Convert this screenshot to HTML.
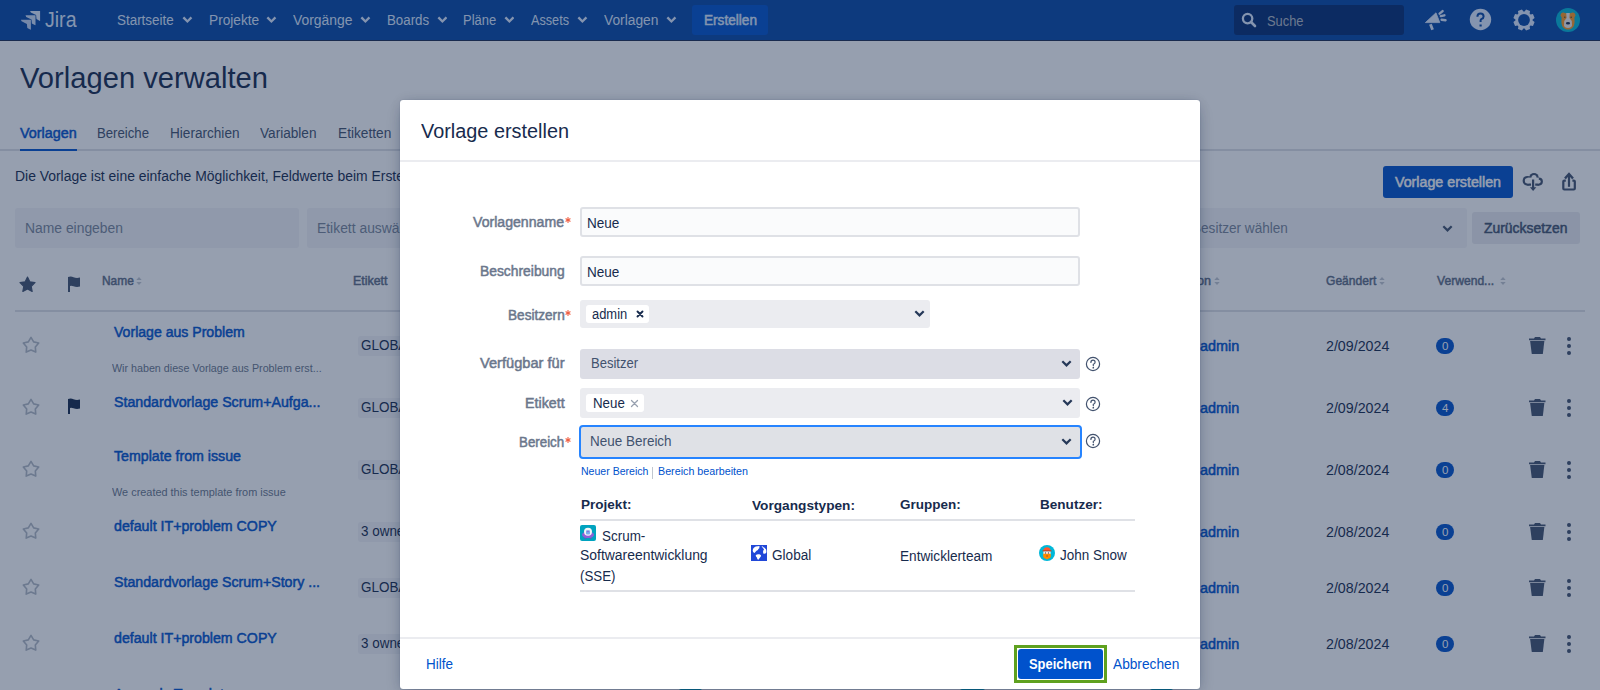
<!DOCTYPE html>
<html><head><meta charset="utf-8"><title>Vorlagen verwalten</title>
<style>
html,body{margin:0;padding:0;width:1600px;height:690px;overflow:hidden;background:#fff;font-family:"Liberation Sans", sans-serif;}
.t{position:absolute;white-space:nowrap;transform-origin:0 0;}
svg{display:block}
</style></head><body>
<div style="position:absolute;left:0px;top:0px;width:1600px;height:40px;background:#0747a6"></div>
<div style="position:absolute;left:0px;top:40px;width:1600px;height:1px;background:#1d2d50"></div>
<svg style="position:absolute;left:20px;top:10px" width="21" height="21" viewBox="0 0 21 21"><path transform="translate(10.1 0.9)" d="M0 0 H10 V10 L9.3 9.8 L6.4 8.2 L6 4.2 L0.7 1.6 Z" fill="#deebff" opacity="1"/><path transform="translate(5.5 5.3)" d="M0 0 H10 V10 L9.3 9.8 L6.4 8.2 L6 4.2 L0.7 1.6 Z" fill="#deebff" opacity="0.92"/><path transform="translate(0.9 9.7)" d="M0 0 H10 V10 L9.3 9.8 L6.4 8.2 L6 4.2 L0.7 1.6 Z" fill="#deebff" opacity="0.88"/></svg>
<div class="t" style="left:44.8px;top:10.03px;font-size:21.5px;line-height:21.5px;color:#deebff;transform:scaleX(0.9093);">Jira</div>
<div class="t" style="left:117.3px;top:13.00px;font-size:14px;line-height:14px;color:#deebff;transform:scaleX(0.9588);">Startseite</div>
<svg style="position:absolute;left:182px;top:16.3px" width="10.8" height="7.6" viewBox="0 0 10.8 7.6"><path d="M2.15 2.15 L5.4 5.449999999999999 L8.65 2.15" fill="none" stroke="#deebff" stroke-width="2.3" stroke-linecap="square" stroke-linejoin="miter"/></svg>
<div class="t" style="left:208.8px;top:13.00px;font-size:14px;line-height:14px;color:#deebff;transform:scaleX(0.9774);">Projekte</div>
<svg style="position:absolute;left:266px;top:16.3px" width="10.8" height="7.6" viewBox="0 0 10.8 7.6"><path d="M2.15 2.15 L5.4 5.449999999999999 L8.65 2.15" fill="none" stroke="#deebff" stroke-width="2.3" stroke-linecap="square" stroke-linejoin="miter"/></svg>
<div class="t" style="left:292.8px;top:13.00px;font-size:14px;line-height:14px;color:#deebff;transform:scaleX(0.9909);">Vorgänge</div>
<svg style="position:absolute;left:360px;top:16.3px" width="10.8" height="7.6" viewBox="0 0 10.8 7.6"><path d="M2.15 2.15 L5.4 5.449999999999999 L8.65 2.15" fill="none" stroke="#deebff" stroke-width="2.3" stroke-linecap="square" stroke-linejoin="miter"/></svg>
<div class="t" style="left:386.9px;top:13.00px;font-size:14px;line-height:14px;color:#deebff;transform:scaleX(0.9491);">Boards</div>
<svg style="position:absolute;left:436.5px;top:16.3px" width="10.8" height="7.6" viewBox="0 0 10.8 7.6"><path d="M2.15 2.15 L5.4 5.449999999999999 L8.65 2.15" fill="none" stroke="#deebff" stroke-width="2.3" stroke-linecap="square" stroke-linejoin="miter"/></svg>
<div class="t" style="left:463.4px;top:13.00px;font-size:14px;line-height:14px;color:#deebff;transform:scaleX(0.9272);">Pläne</div>
<svg style="position:absolute;left:503.7px;top:16.3px" width="10.8" height="7.6" viewBox="0 0 10.8 7.6"><path d="M2.15 2.15 L5.4 5.449999999999999 L8.65 2.15" fill="none" stroke="#deebff" stroke-width="2.3" stroke-linecap="square" stroke-linejoin="miter"/></svg>
<div class="t" style="left:531px;top:13.00px;font-size:14px;line-height:14px;color:#deebff;transform:scaleX(0.9045);">Assets</div>
<svg style="position:absolute;left:577px;top:16.3px" width="10.8" height="7.6" viewBox="0 0 10.8 7.6"><path d="M2.15 2.15 L5.4 5.449999999999999 L8.65 2.15" fill="none" stroke="#deebff" stroke-width="2.3" stroke-linecap="square" stroke-linejoin="miter"/></svg>
<div class="t" style="left:603.8px;top:13.00px;font-size:14px;line-height:14px;color:#deebff;transform:scaleX(0.9843);">Vorlagen</div>
<svg style="position:absolute;left:665.8px;top:16.3px" width="10.8" height="7.6" viewBox="0 0 10.8 7.6"><path d="M2.15 2.15 L5.4 5.449999999999999 L8.65 2.15" fill="none" stroke="#deebff" stroke-width="2.3" stroke-linecap="square" stroke-linejoin="miter"/></svg>
<div style="position:absolute;left:692px;top:5px;width:76px;height:30px;background:#0052cc;border-radius:3px"></div>
<div class="t" style="left:704px;top:13.10px;font-size:14px;line-height:14px;color:#deebff;-webkit-text-stroke:0.5px #deebff;transform:scaleX(0.9730);">Erstellen</div>
<div style="position:absolute;left:1234px;top:5px;width:170px;height:30px;background:#052d73;border-radius:3px"></div>
<svg style="position:absolute;left:1241px;top:12px" width="16" height="16" viewBox="0 0 16 16"><circle cx="6.6" cy="6.6" r="4.7" fill="none" stroke="#deebff" stroke-width="2.3"/><path d="M10 10 L14 14" stroke="#deebff" stroke-width="2.6" stroke-linecap="round"/></svg>
<div class="t" style="left:1266.5px;top:14.10px;font-size:14px;line-height:14px;color:#b3bac5;transform:scaleX(0.9195);">Suche</div>
<svg style="position:absolute;left:1420px;top:5px" width="30" height="30" viewBox="0 0 30 30"><path d="M5.4 17.6 L16 7.8 L19.8 17.6 Z" fill="#deebff" stroke="#deebff" stroke-width="0.8" stroke-linejoin="round"/><path d="M10.4 19.3 L12.6 24.8" stroke="#deebff" stroke-width="2.8"/><g stroke="#deebff" stroke-width="2.4" stroke-linecap="round"><path d="M19.6 8.7 L22.6 6.1"/><path d="M20.8 11.1 L24.4 10.3"/><path d="M21.6 14.7 L25.6 15.2"/></g></svg>
<svg style="position:absolute;left:1468.5px;top:8.3px" width="23" height="23" viewBox="0 0 23 23"><circle cx="11.5" cy="11.5" r="10.7" fill="#deebff"/><path d="M8.4 8.8 Q8.4 5.5 11.5 5.5 Q14.6 5.5 14.6 8.4 Q14.6 10.2 12.3 11.2 Q11.6 11.6 11.6 12.6 L11.6 14" fill="none" stroke="#0747a6" stroke-width="2" stroke-linecap="butt"/><rect x="10.5" y="16.5" width="2.2" height="2" fill="#0747a6"/></svg>
<svg style="position:absolute;left:1513.1px;top:8.9px" width="22" height="22" viewBox="0 0 22 22"><polygon points="21.60,13.07 19.96,17.03 17.51,16.62 16.62,17.51 17.03,19.96 13.07,21.60 11.62,19.58 10.38,19.58 8.93,21.60 4.97,19.96 5.38,17.51 4.49,16.62 2.04,17.03 0.40,13.07 2.42,11.62 2.42,10.38 0.40,8.93 2.04,4.97 4.49,5.38 5.38,4.49 4.97,2.04 8.93,0.40 10.38,2.42 11.62,2.42 13.07,0.40 17.03,2.04 16.62,4.49 17.51,5.38 19.96,4.97 21.60,8.93 19.58,10.38 19.58,11.62" fill="#deebff"/><circle cx="11" cy="11" r="5.9" fill="#0747a6"/></svg>
<svg style="position:absolute;left:1556px;top:8px" width="24" height="24" viewBox="0 0 24 24"><circle cx="12" cy="12" r="12" fill="#00b8d9"/><path d="M4.5 7.5 Q5 4.3 7.5 4.6 L9.6 5.2 L14.4 5.2 L16.5 4.6 Q19 4.3 19.5 7.5 L18.4 9.5 L18.6 14 Q18.3 19 15.5 20.5 L13.5 21.5 L10.5 21.5 L8.5 20.5 Q5.7 19 5.4 14 L5.6 9.5 Z" fill="#ff991f"/><path d="M10.2 5 L13.8 5 L13.4 10 L15.8 13 L16 17.5 Q15.5 19.6 12 20 Q8.5 19.6 8 17.5 L8.2 13 L10.6 10 Z" fill="#f0f0f0"/><ellipse cx="12" cy="15.2" rx="2.1" ry="1.2" fill="#172b4d"/><circle cx="8.8" cy="9.2" r="0.8" fill="#5a4a2a"/><circle cx="15.2" cy="9.2" r="0.8" fill="#5a4a2a"/></svg>
<div class="t" style="left:20.3px;top:63.20px;font-size:30px;line-height:30px;color:#172b4d;transform:scaleX(0.9719);">Vorlagen verwalten</div>
<div style="position:absolute;left:0px;top:149px;width:1600px;height:2px;background:#dfe1e6"></div>
<div class="t" style="left:20px;top:125.60px;font-size:14px;line-height:14px;color:#0052cc;-webkit-text-stroke:0.5px #0052cc;transform:scaleX(1.0268);">Vorlagen</div>
<div style="position:absolute;left:20px;top:149px;width:57px;height:2px;background:#0052cc"></div>
<div class="t" style="left:97px;top:125.60px;font-size:14px;line-height:14px;color:#42526e;transform:scaleX(0.9411);">Bereiche</div>
<div class="t" style="left:170px;top:125.60px;font-size:14px;line-height:14px;color:#42526e;transform:scaleX(0.9709);">Hierarchien</div>
<div class="t" style="left:260px;top:125.60px;font-size:14px;line-height:14px;color:#42526e;transform:scaleX(0.9722);">Variablen</div>
<div class="t" style="left:337.5px;top:125.60px;font-size:14px;line-height:14px;color:#42526e;transform:scaleX(0.9775);">Etiketten</div>
<div class="t" style="left:15.4px;top:169.10px;font-size:14px;line-height:14px;color:#172b4d;transform:scaleX(0.9937);">Die Vorlage ist eine einfache Möglichkeit, Feldwerte beim Erstellen von Vorgängen vorab auszufüllen.</div>
<div style="position:absolute;left:15px;top:208px;width:284px;height:40px;background:#f4f5f7;border-radius:3px"></div>
<div class="t" style="left:25px;top:221.10px;font-size:14px;line-height:14px;color:#7a869a;transform:scaleX(0.9914);">Name eingeben</div>
<div style="position:absolute;left:307px;top:208px;width:290px;height:40px;background:#f4f5f7;border-radius:3px"></div>
<div class="t" style="left:317.4px;top:221.10px;font-size:14px;line-height:14px;color:#7a869a;transform:scaleX(0.9914);">Etikett auswählen</div>
<div style="position:absolute;left:1000px;top:208px;width:467px;height:40px;background:#f4f5f7;border-radius:3px"></div>
<div class="t" style="left:1192.1370825000001px;top:221.10px;font-size:14px;line-height:14px;color:#7a869a;transform:scaleX(0.9700);">Besitzer wählen</div>
<svg style="position:absolute;left:1441.5px;top:224.5px" width="11" height="7.5" viewBox="0 0 11 7.5"><path d="M2.1 2.1 L5.5 5.4 L8.9 2.1" fill="none" stroke="#42526e" stroke-width="2.2" stroke-linecap="square" stroke-linejoin="miter"/></svg>
<div style="position:absolute;left:1472px;top:212px;width:108px;height:32px;background:#ebecf0;border-radius:3px"></div>
<div class="t" style="left:1484px;top:220.80px;font-size:14px;line-height:14px;color:#42526e;-webkit-text-stroke:0.5px #42526e;transform:scaleX(0.9936);">Zurücksetzen</div>
<div style="position:absolute;left:1383px;top:166px;width:130px;height:32px;background:#0052cc;border-radius:3px"></div>
<div class="t" style="left:1395px;top:175.10px;font-size:14px;line-height:14px;color:#ffffff;-webkit-text-stroke:0.5px #ffffff;transform:scaleX(1.0164);">Vorlage erstellen</div>
<svg style="position:absolute;left:1515px;top:165px" width="32" height="30" viewBox="0 0 32 30"><g fill="#42526e"><circle cx="12.5" cy="15.8" r="4.9"/><circle cx="19" cy="12.6" r="4.7"/><circle cx="23.8" cy="16.6" r="4.1"/><rect x="12.5" y="15.8" width="11.3" height="4.9"/></g><g fill="#fff"><circle cx="12.5" cy="15.8" r="2.7"/><circle cx="19" cy="12.6" r="2.5"/><circle cx="23.8" cy="16.6" r="1.9"/><rect x="12.5" y="12.6" width="11.3" height="5.9"/><rect x="16" y="17" width="4.2" height="5"/></g><rect x="17" y="14.5" width="2.2" height="8.5" fill="#42526e"/><path d="M14.9 22.2 L21.3 22.2 L18.1 25.9 Z" fill="#42526e"/></svg>
<svg style="position:absolute;left:1515px;top:165px" width="64" height="30" viewBox="0 0 64 30"><path d="M50.8 15.6 H49.3 Q48.3 15.6 48.3 16.6 V23.5 Q48.3 24.5 49.3 24.5 H58.8 Q59.8 24.5 59.8 23.5 V16.6 Q59.8 15.6 58.8 15.6 H57.4" fill="none" stroke="#42526e" stroke-width="2.2"/><path d="M54 9.5 V21.8" stroke="#42526e" stroke-width="2.2"/><path d="M50.8 12.6 L54 9 L57.2 12.6" fill="none" stroke="#42526e" stroke-width="2.4" stroke-linecap="square"/></svg>
<svg style="position:absolute;left:18.5px;top:275.5px" width="17" height="17" viewBox="-0.6 -0.6 18.2 18.2"><polygon points="8.50,0.60 11.00,5.66 16.58,6.47 12.54,10.41 13.50,15.98 8.50,13.35 3.50,15.98 4.46,10.41 0.42,6.47 6.00,5.66" fill="#42526e" stroke="#42526e" stroke-width="1.2" stroke-linejoin="round"/></svg>
<svg style="position:absolute;left:66.5px;top:276px" width="14" height="16" viewBox="0 0 14 16"><path d="M1 1 Q4 0 6.5 1.2 Q9.5 2.5 13 1.5 V10.5 Q9.5 11.5 6.5 10.2 Q4 9.2 3 10 V16 H1 Z" fill="#42526e"/></svg>
<div class="t" style="left:102px;top:273.95px;font-size:13px;line-height:13px;color:#5e6c84;-webkit-text-stroke:0.5px #5e6c84;transform:scaleX(0.9170);">Name</div>
<svg style="position:absolute;left:136.2px;top:277px" width="6" height="9" viewBox="0 0 6 9"><path d="M0.3 3 L3 0 L5.7 3 Z M0.3 5 L3 8 L5.7 5 Z" fill="#c1c7d0"/></svg>
<div class="t" style="left:353px;top:273.95px;font-size:13px;line-height:13px;color:#5e6c84;-webkit-text-stroke:0.5px #5e6c84;transform:scaleX(0.9550);">Etikett</div>
<div class="t" style="left:1169.43954203125px;top:273.95px;font-size:13px;line-height:13px;color:#5e6c84;-webkit-text-stroke:0.5px #5e6c84;transform:scaleX(0.9700);">Version</div>
<svg style="position:absolute;left:1214.3px;top:277px" width="6" height="9" viewBox="0 0 6 9"><path d="M0.3 3 L3 0 L5.7 3 Z M0.3 5 L3 8 L5.7 5 Z" fill="#c1c7d0"/></svg>
<div class="t" style="left:1326.3px;top:273.95px;font-size:13px;line-height:13px;color:#5e6c84;-webkit-text-stroke:0.5px #5e6c84;transform:scaleX(0.9280);">Geändert</div>
<svg style="position:absolute;left:1379.3px;top:277px" width="6" height="9" viewBox="0 0 6 9"><path d="M0.3 3 L3 0 L5.7 3 Z M0.3 5 L3 8 L5.7 5 Z" fill="#c1c7d0"/></svg>
<div class="t" style="left:1436.5px;top:273.95px;font-size:13px;line-height:13px;color:#5e6c84;-webkit-text-stroke:0.5px #5e6c84;transform:scaleX(0.9312);">Verwend...</div>
<svg style="position:absolute;left:1500.3px;top:277px" width="6" height="9" viewBox="0 0 6 9"><path d="M0.3 3 L3 0 L5.7 3 Z M0.3 5 L3 8 L5.7 5 Z" fill="#c1c7d0"/></svg>
<div style="position:absolute;left:15px;top:310px;width:1570px;height:2px;background:#dfe1e6"></div>
<svg style="position:absolute;left:22px;top:336.4px" width="18" height="18" viewBox="-1 -1 20 20"><polygon points="9.00,0.60 11.96,5.52 17.56,6.82 13.79,11.16 14.29,16.88 9.00,14.64 3.71,16.88 4.21,11.16 0.44,6.82 6.04,5.52" fill="none" stroke="#b3bac5" stroke-width="1.8" stroke-linejoin="round"/></svg>
<div class="t" style="left:114px;top:324.90px;font-size:14px;line-height:14px;color:#0052cc;-webkit-text-stroke:0.5px #0052cc;transform:scaleX(1.0056);">Vorlage aus Problem</div>
<div class="t" style="left:112px;top:362.65px;font-size:11px;line-height:11px;color:#6b778c;transform:scaleX(0.9739);">Wir haben diese Vorlage aus Problem erst...</div>
<div style="position:absolute;left:357.5px;top:336px;width:80px;height:19.5px;background:#f4f5f7;border-radius:3px"></div>
<div class="t" style="left:361.4px;top:337.70px;font-size:14px;line-height:14px;color:#172b4d;transform:scaleX(0.9600);">GLOBAL</div>
<div class="t" style="left:1200px;top:338.90px;font-size:14px;line-height:14px;color:#0052cc;-webkit-text-stroke:0.5px #0052cc;transform:scaleX(1.0307);">admin</div>
<div class="t" style="left:1326px;top:338.90px;font-size:14px;line-height:14px;color:#172b4d;transform:scaleX(1.0163);">2/09/2024</div>
<div style="position:absolute;left:1436px;top:337.8px;width:18px;height:16px;background:#0052cc;border-radius:8px"></div>
<div class="t" style="left:1442px;top:340.73px;font-size:11.5px;line-height:11.5px;color:#ffffff;">0</div>
<svg style="position:absolute;left:1529px;top:337px" width="17" height="17" viewBox="0 0 17 17"><path d="M0 1.6 H5 L6 0 H11 L12 1.6 H16.5 V3.2 H0 Z" fill="#42526e"/><path d="M1.1 4 H15.4 L13.8 17 H2.8 Z" fill="#42526e"/></svg>
<div style="position:absolute;left:1567.2px;top:336.90000000000003px;width:3.8px;height:3.8px;background:#42526e;border-radius:50%"></div>
<div style="position:absolute;left:1567.2px;top:344.0px;width:3.8px;height:3.8px;background:#42526e;border-radius:50%"></div>
<div style="position:absolute;left:1567.2px;top:351.1px;width:3.8px;height:3.8px;background:#42526e;border-radius:50%"></div>
<svg style="position:absolute;left:22px;top:398.4px" width="18" height="18" viewBox="-1 -1 20 20"><polygon points="9.00,0.60 11.96,5.52 17.56,6.82 13.79,11.16 14.29,16.88 9.00,14.64 3.71,16.88 4.21,11.16 0.44,6.82 6.04,5.52" fill="none" stroke="#b3bac5" stroke-width="1.8" stroke-linejoin="round"/></svg>
<svg style="position:absolute;left:66.5px;top:398px" width="14" height="16" viewBox="0 0 14 16"><path d="M1 1 Q4 0 6.5 1.2 Q9.5 2.5 13 1.5 V10.5 Q9.5 11.5 6.5 10.2 Q4 9.2 3 10 V16 H1 Z" fill="#172b4d"/></svg>
<div class="t" style="left:114px;top:394.80px;font-size:14px;line-height:14px;color:#0052cc;-webkit-text-stroke:0.5px #0052cc;transform:scaleX(1.0142);">Standardvorlage Scrum+Aufga...</div>
<div style="position:absolute;left:357.5px;top:398px;width:80px;height:19.5px;background:#f4f5f7;border-radius:3px"></div>
<div class="t" style="left:361.4px;top:399.70px;font-size:14px;line-height:14px;color:#172b4d;transform:scaleX(0.9600);">GLOBAL</div>
<div class="t" style="left:1200px;top:400.90px;font-size:14px;line-height:14px;color:#0052cc;-webkit-text-stroke:0.5px #0052cc;transform:scaleX(1.0307);">admin</div>
<div class="t" style="left:1326px;top:400.90px;font-size:14px;line-height:14px;color:#172b4d;transform:scaleX(1.0163);">2/09/2024</div>
<div style="position:absolute;left:1436px;top:399.8px;width:18px;height:16px;background:#0052cc;border-radius:8px"></div>
<div class="t" style="left:1442px;top:402.73px;font-size:11.5px;line-height:11.5px;color:#ffffff;">4</div>
<svg style="position:absolute;left:1529px;top:399px" width="17" height="17" viewBox="0 0 17 17"><path d="M0 1.6 H5 L6 0 H11 L12 1.6 H16.5 V3.2 H0 Z" fill="#42526e"/><path d="M1.1 4 H15.4 L13.8 17 H2.8 Z" fill="#42526e"/></svg>
<div style="position:absolute;left:1567.2px;top:398.90000000000003px;width:3.8px;height:3.8px;background:#42526e;border-radius:50%"></div>
<div style="position:absolute;left:1567.2px;top:406.0px;width:3.8px;height:3.8px;background:#42526e;border-radius:50%"></div>
<div style="position:absolute;left:1567.2px;top:413.1px;width:3.8px;height:3.8px;background:#42526e;border-radius:50%"></div>
<svg style="position:absolute;left:22px;top:460.4px" width="18" height="18" viewBox="-1 -1 20 20"><polygon points="9.00,0.60 11.96,5.52 17.56,6.82 13.79,11.16 14.29,16.88 9.00,14.64 3.71,16.88 4.21,11.16 0.44,6.82 6.04,5.52" fill="none" stroke="#b3bac5" stroke-width="1.8" stroke-linejoin="round"/></svg>
<div class="t" style="left:114px;top:448.90px;font-size:14px;line-height:14px;color:#0052cc;-webkit-text-stroke:0.5px #0052cc;transform:scaleX(1.0138);">Template from issue</div>
<div class="t" style="left:112px;top:486.65px;font-size:11px;line-height:11px;color:#6b778c;transform:scaleX(0.9911);">We created this template from issue</div>
<div style="position:absolute;left:357.5px;top:460px;width:80px;height:19.5px;background:#f4f5f7;border-radius:3px"></div>
<div class="t" style="left:361.4px;top:461.70px;font-size:14px;line-height:14px;color:#172b4d;transform:scaleX(0.9600);">GLOBAL</div>
<div class="t" style="left:1200px;top:462.90px;font-size:14px;line-height:14px;color:#0052cc;-webkit-text-stroke:0.5px #0052cc;transform:scaleX(1.0307);">admin</div>
<div class="t" style="left:1326px;top:462.90px;font-size:14px;line-height:14px;color:#172b4d;transform:scaleX(1.0163);">2/08/2024</div>
<div style="position:absolute;left:1436px;top:461.8px;width:18px;height:16px;background:#0052cc;border-radius:8px"></div>
<div class="t" style="left:1442px;top:464.73px;font-size:11.5px;line-height:11.5px;color:#ffffff;">0</div>
<svg style="position:absolute;left:1529px;top:461px" width="17" height="17" viewBox="0 0 17 17"><path d="M0 1.6 H5 L6 0 H11 L12 1.6 H16.5 V3.2 H0 Z" fill="#42526e"/><path d="M1.1 4 H15.4 L13.8 17 H2.8 Z" fill="#42526e"/></svg>
<div style="position:absolute;left:1567.2px;top:460.90000000000003px;width:3.8px;height:3.8px;background:#42526e;border-radius:50%"></div>
<div style="position:absolute;left:1567.2px;top:468.0px;width:3.8px;height:3.8px;background:#42526e;border-radius:50%"></div>
<div style="position:absolute;left:1567.2px;top:475.1px;width:3.8px;height:3.8px;background:#42526e;border-radius:50%"></div>
<svg style="position:absolute;left:22px;top:522.4px" width="18" height="18" viewBox="-1 -1 20 20"><polygon points="9.00,0.60 11.96,5.52 17.56,6.82 13.79,11.16 14.29,16.88 9.00,14.64 3.71,16.88 4.21,11.16 0.44,6.82 6.04,5.52" fill="none" stroke="#b3bac5" stroke-width="1.8" stroke-linejoin="round"/></svg>
<div class="t" style="left:114px;top:518.80px;font-size:14px;line-height:14px;color:#0052cc;-webkit-text-stroke:0.5px #0052cc;transform:scaleX(1.0132);">default IT+problem COPY</div>
<div style="position:absolute;left:357.5px;top:522px;width:80px;height:19.5px;background:#f4f5f7;border-radius:3px"></div>
<div class="t" style="left:361.4px;top:523.70px;font-size:14px;line-height:14px;color:#172b4d;transform:scaleX(0.9600);">3 owners</div>
<div class="t" style="left:1200px;top:524.90px;font-size:14px;line-height:14px;color:#0052cc;-webkit-text-stroke:0.5px #0052cc;transform:scaleX(1.0307);">admin</div>
<div class="t" style="left:1326px;top:524.90px;font-size:14px;line-height:14px;color:#172b4d;transform:scaleX(1.0163);">2/08/2024</div>
<div style="position:absolute;left:1436px;top:523.8px;width:18px;height:16px;background:#0052cc;border-radius:8px"></div>
<div class="t" style="left:1442px;top:526.73px;font-size:11.5px;line-height:11.5px;color:#ffffff;">0</div>
<svg style="position:absolute;left:1529px;top:523px" width="17" height="17" viewBox="0 0 17 17"><path d="M0 1.6 H5 L6 0 H11 L12 1.6 H16.5 V3.2 H0 Z" fill="#42526e"/><path d="M1.1 4 H15.4 L13.8 17 H2.8 Z" fill="#42526e"/></svg>
<div style="position:absolute;left:1567.2px;top:522.9px;width:3.8px;height:3.8px;background:#42526e;border-radius:50%"></div>
<div style="position:absolute;left:1567.2px;top:530.0px;width:3.8px;height:3.8px;background:#42526e;border-radius:50%"></div>
<div style="position:absolute;left:1567.2px;top:537.1px;width:3.8px;height:3.8px;background:#42526e;border-radius:50%"></div>
<svg style="position:absolute;left:22px;top:578.4px" width="18" height="18" viewBox="-1 -1 20 20"><polygon points="9.00,0.60 11.96,5.52 17.56,6.82 13.79,11.16 14.29,16.88 9.00,14.64 3.71,16.88 4.21,11.16 0.44,6.82 6.04,5.52" fill="none" stroke="#b3bac5" stroke-width="1.8" stroke-linejoin="round"/></svg>
<div class="t" style="left:114px;top:574.80px;font-size:14px;line-height:14px;color:#0052cc;-webkit-text-stroke:0.5px #0052cc;transform:scaleX(1.0124);">Standardvorlage Scrum+Story ...</div>
<div style="position:absolute;left:357.5px;top:578px;width:80px;height:19.5px;background:#f4f5f7;border-radius:3px"></div>
<div class="t" style="left:361.4px;top:579.70px;font-size:14px;line-height:14px;color:#172b4d;transform:scaleX(0.9600);">GLOBAL</div>
<div class="t" style="left:1200px;top:580.90px;font-size:14px;line-height:14px;color:#0052cc;-webkit-text-stroke:0.5px #0052cc;transform:scaleX(1.0307);">admin</div>
<div class="t" style="left:1326px;top:580.90px;font-size:14px;line-height:14px;color:#172b4d;transform:scaleX(1.0163);">2/08/2024</div>
<div style="position:absolute;left:1436px;top:579.8px;width:18px;height:16px;background:#0052cc;border-radius:8px"></div>
<div class="t" style="left:1442px;top:582.73px;font-size:11.5px;line-height:11.5px;color:#ffffff;">0</div>
<svg style="position:absolute;left:1529px;top:579px" width="17" height="17" viewBox="0 0 17 17"><path d="M0 1.6 H5 L6 0 H11 L12 1.6 H16.5 V3.2 H0 Z" fill="#42526e"/><path d="M1.1 4 H15.4 L13.8 17 H2.8 Z" fill="#42526e"/></svg>
<div style="position:absolute;left:1567.2px;top:578.9px;width:3.8px;height:3.8px;background:#42526e;border-radius:50%"></div>
<div style="position:absolute;left:1567.2px;top:586.0px;width:3.8px;height:3.8px;background:#42526e;border-radius:50%"></div>
<div style="position:absolute;left:1567.2px;top:593.1px;width:3.8px;height:3.8px;background:#42526e;border-radius:50%"></div>
<svg style="position:absolute;left:22px;top:634.4px" width="18" height="18" viewBox="-1 -1 20 20"><polygon points="9.00,0.60 11.96,5.52 17.56,6.82 13.79,11.16 14.29,16.88 9.00,14.64 3.71,16.88 4.21,11.16 0.44,6.82 6.04,5.52" fill="none" stroke="#b3bac5" stroke-width="1.8" stroke-linejoin="round"/></svg>
<div class="t" style="left:114px;top:630.80px;font-size:14px;line-height:14px;color:#0052cc;-webkit-text-stroke:0.5px #0052cc;transform:scaleX(1.0132);">default IT+problem COPY</div>
<div style="position:absolute;left:357.5px;top:634px;width:80px;height:19.5px;background:#f4f5f7;border-radius:3px"></div>
<div class="t" style="left:361.4px;top:635.70px;font-size:14px;line-height:14px;color:#172b4d;transform:scaleX(0.9600);">3 owners</div>
<div class="t" style="left:1200px;top:636.90px;font-size:14px;line-height:14px;color:#0052cc;-webkit-text-stroke:0.5px #0052cc;transform:scaleX(1.0307);">admin</div>
<div class="t" style="left:1326px;top:636.90px;font-size:14px;line-height:14px;color:#172b4d;transform:scaleX(1.0163);">2/08/2024</div>
<div style="position:absolute;left:1436px;top:635.8px;width:18px;height:16px;background:#0052cc;border-radius:8px"></div>
<div class="t" style="left:1442px;top:638.73px;font-size:11.5px;line-height:11.5px;color:#ffffff;">0</div>
<svg style="position:absolute;left:1529px;top:635px" width="17" height="17" viewBox="0 0 17 17"><path d="M0 1.6 H5 L6 0 H11 L12 1.6 H16.5 V3.2 H0 Z" fill="#42526e"/><path d="M1.1 4 H15.4 L13.8 17 H2.8 Z" fill="#42526e"/></svg>
<div style="position:absolute;left:1567.2px;top:634.9px;width:3.8px;height:3.8px;background:#42526e;border-radius:50%"></div>
<div style="position:absolute;left:1567.2px;top:642.0px;width:3.8px;height:3.8px;background:#42526e;border-radius:50%"></div>
<div style="position:absolute;left:1567.2px;top:649.1px;width:3.8px;height:3.8px;background:#42526e;border-radius:50%"></div>
<svg style="position:absolute;left:22px;top:690.4px" width="18" height="18" viewBox="-1 -1 20 20"><polygon points="9.00,0.60 11.96,5.52 17.56,6.82 13.79,11.16 14.29,16.88 9.00,14.64 3.71,16.88 4.21,11.16 0.44,6.82 6.04,5.52" fill="none" stroke="#b3bac5" stroke-width="1.8" stroke-linejoin="round"/></svg>
<div class="t" style="left:114px;top:686.80px;font-size:14px;line-height:14px;color:#0052cc;-webkit-text-stroke:0.5px #0052cc;transform:scaleX(1.0269);">Anomaly Template</div>
<div style="position:absolute;left:357.5px;top:690px;width:80px;height:19.5px;background:#f4f5f7;border-radius:3px"></div>
<div class="t" style="left:361.4px;top:691.70px;font-size:14px;line-height:14px;color:#172b4d;transform:scaleX(0.9600);">GLOBAL</div>
<div class="t" style="left:1200px;top:692.90px;font-size:14px;line-height:14px;color:#0052cc;-webkit-text-stroke:0.5px #0052cc;transform:scaleX(1.0307);">admin</div>
<div class="t" style="left:1326px;top:692.90px;font-size:14px;line-height:14px;color:#172b4d;transform:scaleX(1.0163);">2/08/2024</div>
<div style="position:absolute;left:1436px;top:691.8px;width:18px;height:16px;background:#0052cc;border-radius:8px"></div>
<div class="t" style="left:1442px;top:694.73px;font-size:11.5px;line-height:11.5px;color:#ffffff;">0</div>
<svg style="position:absolute;left:1529px;top:691px" width="17" height="17" viewBox="0 0 17 17"><path d="M0 1.6 H5 L6 0 H11 L12 1.6 H16.5 V3.2 H0 Z" fill="#42526e"/><path d="M1.1 4 H15.4 L13.8 17 H2.8 Z" fill="#42526e"/></svg>
<div style="position:absolute;left:1567.2px;top:690.9px;width:3.8px;height:3.8px;background:#42526e;border-radius:50%"></div>
<div style="position:absolute;left:1567.2px;top:698.0px;width:3.8px;height:3.8px;background:#42526e;border-radius:50%"></div>
<div style="position:absolute;left:1567.2px;top:705.1px;width:3.8px;height:3.8px;background:#42526e;border-radius:50%"></div>
<div style="position:absolute;left:679px;top:688.6px;width:23px;height:2px;background:#00a3bf;border-radius:2px 2px 0 0"></div>
<div style="position:absolute;left:960px;top:688.6px;width:25px;height:2px;background:#00a3bf;border-radius:2px 2px 0 0"></div>
<div style="position:absolute;left:1150px;top:688.6px;width:23px;height:2px;background:#00a3bf;border-radius:2px 2px 0 0"></div>
<div style="position:absolute;left:0px;top:0px;width:1600px;height:690px;background:rgba(23,43,77,0.45)"></div>
<div style="position:absolute;left:400px;top:100px;width:800px;height:588.5px;background:#fff;border-radius:3px;box-shadow:0 0 1px rgba(9,30,66,0.31),0 8px 16px -4px rgba(9,30,66,0.25),0 0 12px -4px rgba(9,30,66,0.3)"></div>
<div class="t" style="left:420.6px;top:120.75px;font-size:20px;line-height:20px;color:#172b4d;transform:scaleX(0.9934);">Vorlage erstellen</div>
<div style="position:absolute;left:400px;top:160px;width:800px;height:2px;background:#ebecf0"></div>
<div style="position:absolute;left:400px;top:637px;width:800px;height:2px;background:#ebecf0"></div>
<div class="t" style="left:473.29999999999995px;top:214.80px;font-size:14px;line-height:14px;color:#6b778c;-webkit-text-stroke:0.5px #6b778c;transform:scaleX(1.0079);">Vorlagenname</div>
<svg style="position:absolute;left:565.3px;top:217.1px" width="6" height="6" viewBox="0 0 6 6"><g stroke="#ef5c3f" stroke-width="1.1" stroke-linecap="round"><path d="M3 0.6 V5.4"/><path d="M0.9 1.8 L5.1 4.2"/><path d="M0.9 4.2 L5.1 1.8"/></g></svg>
<div style="position:absolute;left:580px;top:207px;width:500px;height:30px;box-sizing:border-box;background:#fafbfc;border:2px solid #dfe1e6;border-radius:3px"></div>
<div class="t" style="left:586.5px;top:215.70px;font-size:14px;line-height:14px;color:#172b4d;transform:scaleX(0.9681);">Neue</div>
<div class="t" style="left:479.59999999999997px;top:263.70px;font-size:14px;line-height:14px;color:#6b778c;-webkit-text-stroke:0.5px #6b778c;transform:scaleX(0.9893);">Beschreibung</div>
<div style="position:absolute;left:580px;top:256px;width:500px;height:30px;box-sizing:border-box;background:#fafbfc;border:2px solid #dfe1e6;border-radius:3px"></div>
<div class="t" style="left:586.5px;top:264.80px;font-size:14px;line-height:14px;color:#172b4d;transform:scaleX(0.9681);">Neue</div>
<div class="t" style="left:507.59999999999997px;top:307.60px;font-size:14px;line-height:14px;color:#6b778c;-webkit-text-stroke:0.5px #6b778c;transform:scaleX(0.9716);">Besitzern</div>
<svg style="position:absolute;left:565.3px;top:309.9px" width="6" height="6" viewBox="0 0 6 6"><g stroke="#ef5c3f" stroke-width="1.1" stroke-linecap="round"><path d="M3 0.6 V5.4"/><path d="M0.9 1.8 L5.1 4.2"/><path d="M0.9 4.2 L5.1 1.8"/></g></svg>
<div style="position:absolute;left:580px;top:300px;width:350px;height:28px;background:#ebecf0;border-radius:3px"></div>
<div style="position:absolute;left:586px;top:305px;width:63px;height:18px;background:#fff;border-radius:3px"></div>
<div class="t" style="left:592.4px;top:306.60px;font-size:14px;line-height:14px;color:#172b4d;transform:scaleX(0.9231);">admin</div>
<svg style="position:absolute;left:636px;top:310px" width="8" height="8" viewBox="0 0 8 8"><path d="M1.5 1.5 L6.5 6.5 M6.5 1.5 L1.5 6.5" stroke="#172b4d" stroke-width="1.9" stroke-linecap="round"/></svg>
<svg style="position:absolute;left:913.6px;top:310px" width="11" height="7.5" viewBox="0 0 11 7.5"><path d="M2.1 2.1 L5.5 5.4 L8.9 2.1" fill="none" stroke="#253858" stroke-width="2.2" stroke-linecap="square" stroke-linejoin="miter"/></svg>
<div class="t" style="left:479.79999999999995px;top:355.50px;font-size:14px;line-height:14px;color:#6b778c;-webkit-text-stroke:0.5px #6b778c;transform:scaleX(1.0440);">Verfügbar für</div>
<div style="position:absolute;left:580px;top:349px;width:500px;height:30px;background:#dcdde5;border-radius:3px"></div>
<div class="t" style="left:590.7px;top:355.50px;font-size:14px;line-height:14px;color:#42526e;transform:scaleX(0.9313);">Besitzer</div>
<svg style="position:absolute;left:1061px;top:360px" width="11" height="7.5" viewBox="0 0 11 7.5"><path d="M2.1 2.1 L5.5 5.4 L8.9 2.1" fill="none" stroke="#253858" stroke-width="2.2" stroke-linecap="square" stroke-linejoin="miter"/></svg>
<div class="t" style="left:525.1999999999999px;top:395.90px;font-size:14px;line-height:14px;color:#6b778c;-webkit-text-stroke:0.5px #6b778c;transform:scaleX(1.0179);">Etikett</div>
<div style="position:absolute;left:580px;top:388px;width:500px;height:30px;background:#ebecf0;border-radius:3px"></div>
<div style="position:absolute;left:586px;top:394px;width:58px;height:18px;background:#fff;border-radius:3px"></div>
<div class="t" style="left:592.8px;top:395.90px;font-size:14px;line-height:14px;color:#172b4d;transform:scaleX(0.9501);">Neue</div>
<svg style="position:absolute;left:630px;top:399px" width="9" height="9" viewBox="0 0 9 9"><path d="M1.5 1.5 L7.5 7.5 M7.5 1.5 L1.5 7.5" stroke="#97a0af" stroke-width="1.3" stroke-linecap="round"/></svg>
<svg style="position:absolute;left:1062px;top:399px" width="11" height="7.5" viewBox="0 0 11 7.5"><path d="M2.1 2.1 L5.5 5.4 L8.9 2.1" fill="none" stroke="#253858" stroke-width="2.2" stroke-linecap="square" stroke-linejoin="miter"/></svg>
<div class="t" style="left:518.8px;top:435.10px;font-size:14px;line-height:14px;color:#6b778c;-webkit-text-stroke:0.5px #6b778c;transform:scaleX(0.9522);">Bereich</div>
<svg style="position:absolute;left:565px;top:437.4px" width="6" height="6" viewBox="0 0 6 6"><g stroke="#ef5c3f" stroke-width="1.1" stroke-linecap="round"><path d="M3 0.6 V5.4"/><path d="M0.9 1.8 L5.1 4.2"/><path d="M0.9 4.2 L5.1 1.8"/></g></svg>
<div style="position:absolute;left:578.5px;top:425px;width:503px;height:34px;box-sizing:border-box;background:#dfe1e6;border:2px solid #2684ff;border-radius:4px"></div>
<div class="t" style="left:590.4px;top:434.10px;font-size:14px;line-height:14px;color:#42526e;transform:scaleX(0.9619);">Neue Bereich</div>
<svg style="position:absolute;left:1061px;top:438px" width="11" height="7.5" viewBox="0 0 11 7.5"><path d="M2.1 2.1 L5.5 5.4 L8.9 2.1" fill="none" stroke="#253858" stroke-width="2.2" stroke-linecap="square" stroke-linejoin="miter"/></svg>
<svg style="position:absolute;left:1085px;top:355.5px" width="16" height="16" viewBox="0 0 16 16"><circle cx="8" cy="8" r="6.6" fill="none" stroke="#42526e" stroke-width="1.2"/><path d="M5.9 6.4 Q5.9 4.2 8 4.2 Q10.1 4.2 10.1 6.2 Q10.1 7.6 8.3 8.3 L8.3 9.6" fill="none" stroke="#42526e" stroke-width="1.2" stroke-linecap="round"/><circle cx="8.3" cy="11.7" r="0.85" fill="#42526e"/></svg>
<svg style="position:absolute;left:1085px;top:395.5px" width="16" height="16" viewBox="0 0 16 16"><circle cx="8" cy="8" r="6.6" fill="none" stroke="#42526e" stroke-width="1.2"/><path d="M5.9 6.4 Q5.9 4.2 8 4.2 Q10.1 4.2 10.1 6.2 Q10.1 7.6 8.3 8.3 L8.3 9.6" fill="none" stroke="#42526e" stroke-width="1.2" stroke-linecap="round"/><circle cx="8.3" cy="11.7" r="0.85" fill="#42526e"/></svg>
<svg style="position:absolute;left:1085px;top:433px" width="16" height="16" viewBox="0 0 16 16"><circle cx="8" cy="8" r="6.6" fill="none" stroke="#42526e" stroke-width="1.2"/><path d="M5.9 6.4 Q5.9 4.2 8 4.2 Q10.1 4.2 10.1 6.2 Q10.1 7.6 8.3 8.3 L8.3 9.6" fill="none" stroke="#42526e" stroke-width="1.2" stroke-linecap="round"/><circle cx="8.3" cy="11.7" r="0.85" fill="#42526e"/></svg>
<div class="t" style="left:580.6px;top:466.23px;font-size:11.5px;line-height:11.5px;color:#0052cc;transform:scaleX(0.9169);">Neuer Bereich</div>
<div style="position:absolute;left:652px;top:466.5px;width:1.4px;height:12px;background:#c1c7d0"></div>
<div class="t" style="left:657.5px;top:466.23px;font-size:11.5px;line-height:11.5px;color:#0052cc;transform:scaleX(0.9323);">Bereich bearbeiten</div>
<div class="t" style="left:580.6px;top:498.32px;font-size:13.5px;line-height:13.5px;color:#172b4d;font-weight:bold;transform:scaleX(1.0027);">Projekt:</div>
<div class="t" style="left:751.5px;top:498.52px;font-size:13.5px;line-height:13.5px;color:#172b4d;font-weight:bold;transform:scaleX(1.0122);">Vorgangstypen:</div>
<div class="t" style="left:900px;top:498.32px;font-size:13.5px;line-height:13.5px;color:#172b4d;font-weight:bold;transform:scaleX(0.9993);">Gruppen:</div>
<div class="t" style="left:1039.5px;top:498.32px;font-size:13.5px;line-height:13.5px;color:#172b4d;font-weight:bold;transform:scaleX(1.0040);">Benutzer:</div>
<div style="position:absolute;left:580px;top:519px;width:555px;height:2px;background:#dfe1e6"></div>
<div style="position:absolute;left:580px;top:590px;width:555px;height:2px;background:#dfe1e6"></div>
<svg style="position:absolute;left:580px;top:525px" width="16" height="16" viewBox="0 0 16 16"><rect width="16" height="16" rx="2" fill="#00a3bf"/><path d="M4.4 12.5 L4.8 14 H6 L6.2 12.5 Z M9.8 12.5 L10 14 H11.2 L11.6 12.5 Z" fill="#6554c0"/><ellipse cx="8" cy="9.8" rx="6" ry="3.3" fill="#8f5fd6"/><circle cx="8" cy="6.8" r="4" fill="#f4f5f7"/><rect x="6" y="5.2" width="4" height="4.4" rx="1" fill="#79b0ee"/><circle cx="8" cy="6.6" r="0.8" fill="#8f5fd6"/></svg>
<div class="t" style="left:601.5px;top:528.60px;font-size:14px;line-height:14px;color:#172b4d;transform:scaleX(0.9599);">Scrum-</div>
<div class="t" style="left:580.4px;top:548.30px;font-size:14px;line-height:14px;color:#172b4d;transform:scaleX(0.9938);">Softwareentwicklung</div>
<div class="t" style="left:580.4px;top:568.60px;font-size:14px;line-height:14px;color:#172b4d;transform:scaleX(0.9500);">(SSE)</div>
<svg style="position:absolute;left:751px;top:545px" width="16" height="16" viewBox="0 0 16 16"><rect width="16" height="16" fill="#2148d8"/><g fill="#fff"><path d="M1.7 5.8 Q1.9 2.6 4.8 1.5 L8.5 1.1 L8.3 3.3 Q7.2 4 6.9 5.1 Q5.2 5.6 4.8 6.6 L3.6 8 Q1.9 7.5 1.7 5.8 Z"/><path d="M4.7 10.2 Q5.8 9 8.4 9.3 Q10.3 9.9 10.1 11 Q9.2 12.6 7.1 15 Q6 14.1 5.9 12.6 Q4.7 11.6 4.7 10.2 Z"/><path d="M10.5 1.3 Q13.9 1.9 15.1 4.6 Q15.7 6.6 15.1 8.1 Q14 9.1 12.5 8.7 Q11.8 7.4 12.2 6 Q12.5 4.8 13.1 4.3 Q11.7 3 10.5 1.3 Z"/></g></svg>
<div class="t" style="left:772.4px;top:548.10px;font-size:14px;line-height:14px;color:#172b4d;transform:scaleX(0.9711);">Global</div>
<div class="t" style="left:900px;top:548.80px;font-size:14px;line-height:14px;color:#172b4d;transform:scaleX(0.9735);">Entwicklerteam</div>
<svg style="position:absolute;left:1039px;top:545px" width="16" height="16" viewBox="0 0 16 16"><circle cx="8" cy="8" r="8" fill="#00b8d9"/><path d="M4.4 5.8 Q4.6 2.3 8 2.3 Q11.4 2.3 11.6 5.8 Z" fill="#ff5630"/><rect x="3.6" y="5.3" width="8.8" height="1.2" fill="#de350b"/><rect x="4.4" y="6.5" width="7.2" height="3" fill="#ffebe6"/><path d="M4.2 8.8 H11.8 V11.5 Q11.5 13.6 9.8 13.6 Q8.8 14.4 8 14.4 Q7.2 14.4 6.2 13.6 Q4.5 13.6 4.2 11.5 Z" fill="#ff8b00"/><rect x="7.3" y="10.4" width="1.6" height="1.2" fill="#a0522d"/><circle cx="6.5" cy="8" r="0.65" fill="#42526e"/><circle cx="9.5" cy="8" r="0.65" fill="#42526e"/></svg>
<div class="t" style="left:1059.8px;top:548.10px;font-size:14px;line-height:14px;color:#172b4d;transform:scaleX(0.9615);">John Snow</div>
<div class="t" style="left:425.9px;top:656.90px;font-size:14px;line-height:14px;color:#0052cc;transform:scaleX(0.9640);">Hilfe</div>
<div style="position:absolute;left:1014px;top:645px;width:93px;height:38px;box-sizing:border-box;border:3px solid #5fa11f"></div>
<div style="position:absolute;left:1018px;top:649px;width:85px;height:30px;background:#0052cc;border-radius:3px"></div>
<div class="t" style="left:1028.75px;top:656.60px;font-size:14px;line-height:14px;color:#ffffff;font-weight:bold;transform:scaleX(0.9233);">Speichern</div>
<div class="t" style="left:1113px;top:656.60px;font-size:14px;line-height:14px;color:#0052cc;transform:scaleX(0.9783);">Abbrechen</div>
</body></html>
